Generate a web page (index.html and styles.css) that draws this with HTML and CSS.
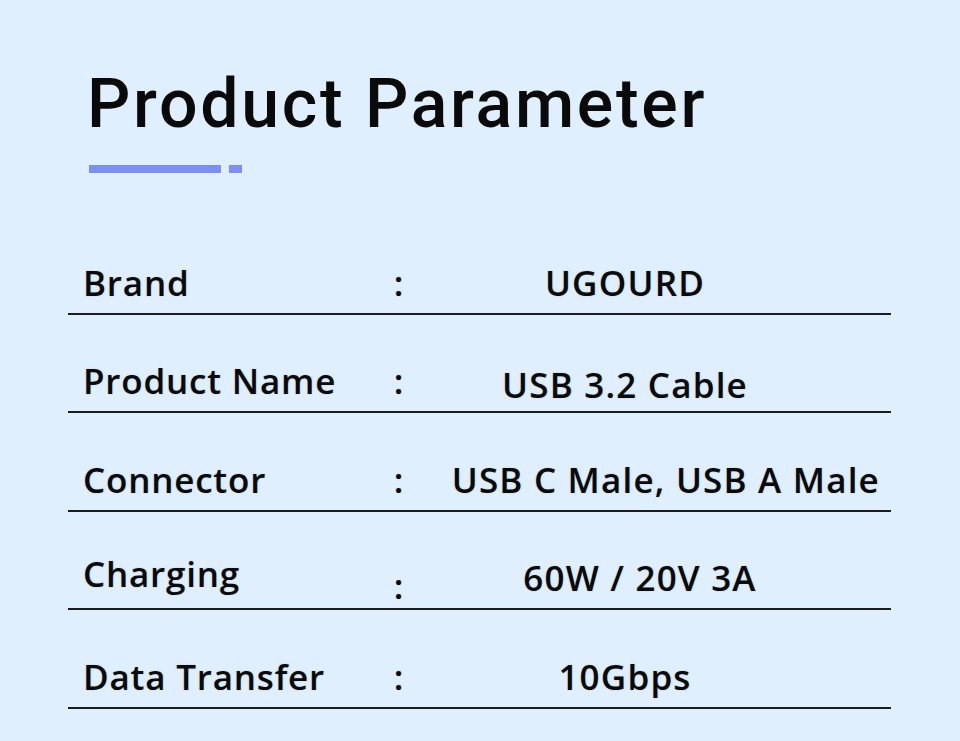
FILE: index.html
```html
<!DOCTYPE html>
<html>
<head>
<meta charset="utf-8">
<link rel="stylesheet" href="styles.css">
</head>
<body>
<div class="page">
  <header class="head">
    <h1 class="title">Product Parameter</h1>
    <div class="accent"><span class="bar"></span><span class="dot"></span></div>
  </header>
  <div class="table">
    <div class="row"><span class="label">Brand</span><span class="colon">:</span><span class="value">UGOURD</span></div>
    <div class="row row-low"><span class="label">Product Name</span><span class="colon">:</span><span class="value">USB 3.2 Cable</span></div>
    <div class="row row-wide"><span class="label">Connector</span><span class="colon">:</span><span class="value">USB C Male, USB A Male</span></div>
    <div class="row row-mid"><span class="label">Charging</span><span class="colon">:</span><span class="value">60W / 20V 3A</span></div>
    <div class="row"><span class="label">Data Transfer</span><span class="colon">:</span><span class="value">10Gbps</span></div>
  </div>
</div>
</body>
</html>
```
FILE: styles.css
```css
html, body {
  margin: 0;
  padding: 0;
  background: #dfeffd;
}
.page {
  width: 960px;
  height: 741px;
  overflow: hidden;
  font-family: "Open Sans", "Noto Sans", sans-serif;
  color: #0a0a0a;
}
.head {
  padding: 64px 0 0 87px;
  height: 152px;
  box-sizing: border-box;
}
.title {
  margin: 0;
  font-family: Roboto, "Open Sans", sans-serif;
  font-weight: 500;
  font-size: 68px;
  line-height: 80px;
  letter-spacing: 2.7px;
}
.accent {
  display: flex;
  gap: 8px;
  margin-top: 21px;
  margin-left: 2px;
}
.bar {
  width: 132px;
  height: 8px;
  background: #7b8ff5;
}
.dot {
  width: 13px;
  height: 8px;
  background: #7b8ff5;
}
.table {
  margin: 64px 69px 0 68px;
}
.row {
  display: grid;
  grid-template-columns: 305px 22px 1fr;
  align-items: end;
  height: 98.5px;
  box-sizing: border-box;
  padding: 0 0 10px 15px;
  border-bottom: 2px solid #1c1c1c;
  font-size: 35px;
  font-weight: 600;
  line-height: 40px;
  letter-spacing: 0.8px;
  text-shadow: 0 0 2px rgba(0,0,0,0.15);
}
.label {
  white-space: nowrap;
}
.colon {
  text-align: center;
}
.value {
  text-align: center;
  padding-right: 51px;
  white-space: nowrap;
  letter-spacing: 1.2px;
}
.row-wide .value {
  text-align: right;
  padding-right: 11px;
}
.row-mid .value {
  padding-right: 21px;
}
.row-mid .label {
  transform: translateY(-4px);
}
.row-mid .colon {
  transform: translateY(8px);
}
.row-low .value {
  transform: translateY(4px);
}
```
